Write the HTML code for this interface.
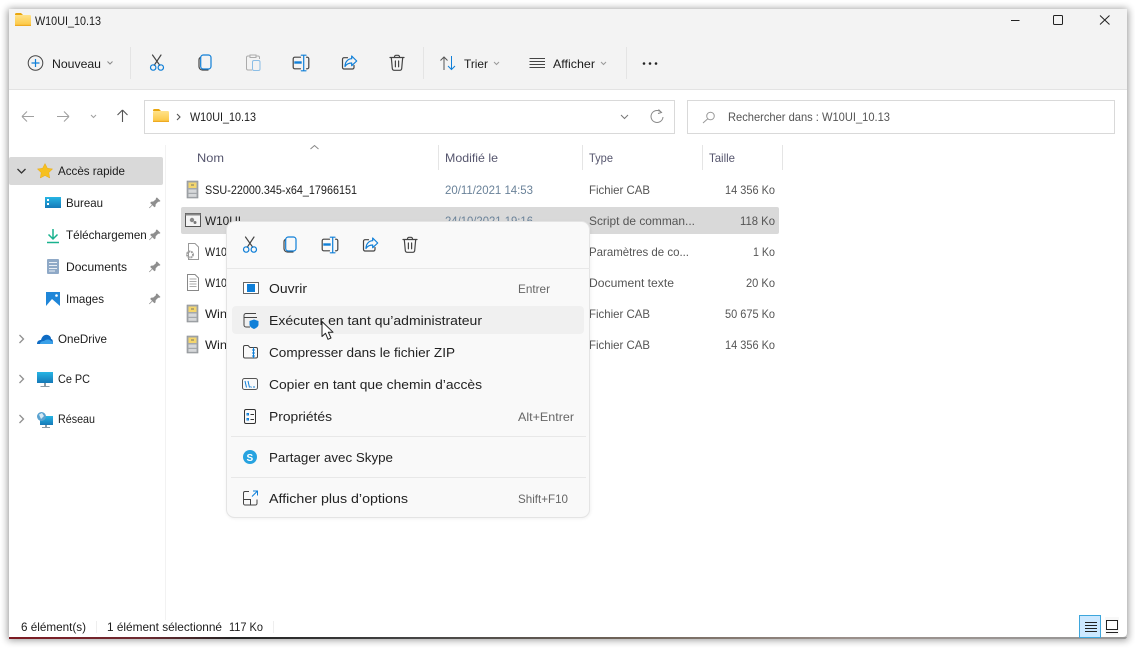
<!DOCTYPE html>
<html lang="fr"><head><meta charset="utf-8"><title>W10UI_10.13</title>
<style>
html,body{margin:0;padding:0;background:#fff;width:1135px;height:648px;overflow:hidden}
svg{display:block}
text{font-family:"Liberation Sans",sans-serif;font-size:12px;fill:#1c1c1c}
.m{font-size:13px;fill:#222}
.s{fill:#666}
.g{fill:#555}
.d{fill:#6a8299}
.h{fill:#56566e}
.b{fill:none;stroke:#0f7fd8;stroke-width:1.2;stroke-linecap:round;stroke-linejoin:round}
.k{fill:none;stroke:#444;stroke-width:1.2;stroke-linecap:round;stroke-linejoin:round}
</style></head><body>
<svg width="1135" height="648" viewBox="0 0 1135 648" xmlns="http://www.w3.org/2000/svg">
<defs>
<filter id="sh" x="-5%" y="-5%" width="110%" height="110%"><feGaussianBlur stdDeviation="4"/></filter>
<filter id="ms" x="-5%" y="-5%" width="110%" height="110%"><feGaussianBlur stdDeviation="1.5"/></filter>
<linearGradient id="edge" x1="0" x2="1" y1="0" y2="0">
<stop offset="0" stop-color="#7d1a22"/><stop offset=".12" stop-color="#6e2a30"/><stop offset=".2" stop-color="#222"/><stop offset=".36" stop-color="#444"/><stop offset=".55" stop-color="#6f6358"/><stop offset=".75" stop-color="#9a8f8a"/><stop offset="1" stop-color="#999"/>
</linearGradient>
<linearGradient id="fold" x1="0" x2="0" y1="0" y2="1"><stop offset="0" stop-color="#ffe28a"/><stop offset="1" stop-color="#fcc63f"/></linearGradient>
<linearGradient id="sky" x1="0" x2="0" y1="0" y2="1"><stop offset="0" stop-color="#27b5e4"/><stop offset="1" stop-color="#1579b8"/></linearGradient>
<clipPath id="tc"><rect x="60" y="225" width="87" height="20"/></clipPath>

<g id="cut"><path class="k" d="M-4.500-7.500 2.800 2.800M4-7.500-2.800 2.800"/><circle class="b" cx="-3.800" cy="5" r="2.700"/><circle class="b" cx="3.800" cy="5" r="2.700"/></g>
<g id="copy"><path class="k" d="M-4.700-5.500C-5.700-5-6-4-6-3V3.500C-6 5.500-4.500 7-2.500 7H3"/><rect class="b" x="-4.300" y="-8" width="10.300" height="14" rx="2.600"/></g>
<g id="ren"><path class="k" d="M-.5-5.800H-6.200A1.600 1.600 0 0 0-7.800-4.200V4.200A1.600 1.600 0 0 0-6.200 5.800H-.5M5.500-5.800H6.200A1.600 1.600 0 0 1 7.800-4.200V4.200A1.600 1.600 0 0 1 6.200 5.800H5.500"/><path d="M-6.700-1.700H.7V.7H-6.700z" fill="#0f7fd8"/><path class="b" d="M2.700-7.800V7.800M.3-7.800H5M.3 7.800H5"/></g>
<g id="sha"><path class="k" d="M-1.500-5.300H-5A1.500 1.500 0 0 0-6.500-3.800V4.500A1.500 1.500 0 0 0-5 6H3.500A1.500 1.500 0 0 0 5 4.500V2.500"/><path class="b" d="M2.700-7 7.700-2 2.700 2.700V0C0 0-2.500 1-4 3.500-4-1-1-4.300 2.700-4.300Z"/></g>
<g id="del"><path class="k" d="M-7-5.500H7M-2.500-5.500V-6.200A1.500 1.500 0 0 1-1-7.700H1A1.500 1.500 0 0 1 2.500-6.200V-5.500M-5.700-5.500-4.700 5.500A2 2 0 0 0-2.700 7.300H2.700A2 2 0 0 0 4.700 5.500L5.700-5.500M-1.600-2V3.800M1.600-2V3.800"/></g>
<g id="folder"><path d="M0 1.500A1.500 1.500 0 0 1 1.500 0H6L8 2H0Z" fill="#e9a60f"/><rect x="0" y="2" width="16" height="11" rx="1.200" fill="url(#fold)"/><rect x="0" y="11.800" width="16" height="1.200" fill="#eeaa22"/></g>
<g id="cab"><rect x="0" y="0" width="11" height="17" fill="#a4a8ac" stroke="#8a8e92" stroke-width=".6"/><rect x="1.500" y="1.500" width="8" height="5.500" fill="#f4d66e"/><rect x="1.500" y="8.500" width="8" height="3.300" fill="#d6d8da"/><rect x="1.500" y="13" width="8" height="2.800" fill="#d6d8da"/><rect x="4" y="3.500" width="3" height="1" fill="#776"/></g>
<g id="pin"><path d="M2.500-5.500 6-2 4.800-1.200 3.700-1.300 1.200 1.200 1 3.500-.2 4.200-2 2.300-5 5.300-5.500 4.800-2.500 1.800-4.300 0-3.500-1.200-1.200-1.500 1.400-3.800 1.400-5Z" fill="#8e8e8e"/></g>
</defs>

<rect width="1135" height="648" fill="#fff"/>
<rect x="8" y="9" width="1120" height="631" fill="#000" opacity=".42" filter="url(#sh)"/>
<path d="M9 637H1127V636C1127 638 1126 639 1124 639H9Z" fill="url(#edge)"/>
<path d="M9 9H1127V633A4 4 0 0 1 1123 637H9Z" fill="#fff"/>
<rect x="9" y="9" width="1118" height="80" fill="#f3f3f3"/>
<rect x="9" y="89" width="1118" height="1" fill="#e3e3e3"/>

<!-- title -->
<use href="#folder" x="15" y="13"/>
<text x="35" y="25" textLength="66" lengthAdjust="spacingAndGlyphs">W10UI_10.13</text>
<path d="M1011 20.500H1019.500" stroke="#222" stroke-width="1"/>
<rect x="1053.500" y="15.500" width="9" height="9" rx="1" fill="none" stroke="#222"/>
<path d="M1100 15.500 1109.500 24.500M1109.500 15.500 1100 24.500" stroke="#222" stroke-width="1"/>

<!-- toolbar -->
<circle cx="35.500" cy="63" r="7.300" fill="none" stroke="#444" stroke-width="1"/>
<path d="M35.500 59V67M31.500 63H39.500" stroke="#0f7fd8" stroke-width="1.200"/>
<text x="52" y="68" textLength="49" lengthAdjust="spacingAndGlyphs">Nouveau</text>
<path d="M107.500 61.500 110 64 112.500 61.500" fill="none" stroke="#888"/>
<rect x="130" y="47" width="1" height="32" fill="#e4e4e4"/>
<use href="#cut" x="157" y="62.500"/>
<use href="#copy" x="205" y="63"/>
<g opacity=".45"><path d="M250 56H248A1.500 1.500 0 0 0 246.500 57.500V68.500A1.500 1.500 0 0 0 248 70H252M256 56H258A1.500 1.500 0 0 1 259.500 57.500V59M250 55H256V57.500H250Z" fill="none" stroke="#555"/><rect x="252.500" y="60.500" width="7.500" height="10" rx="1.500" fill="none" stroke="#0f7fd8"/></g>
<use href="#ren" x="301" y="63"/>
<use href="#sha" x="349" y="63"/>
<use href="#del" x="397" y="63"/>
<rect x="423" y="47" width="1" height="32" fill="#e4e4e4"/>
<path d="M444 70V57M440.500 60.500 444 57 447.500 60.500" fill="none" stroke="#555" stroke-width="1"/>
<path d="M451.500 56V69.500M448 66 451.500 69.500 455 66" fill="none" stroke="#0f7fd8" stroke-width="1"/>
<text x="464" y="68" textLength="24" lengthAdjust="spacingAndGlyphs">Trier</text>
<path d="M494 62 496.500 64.500 499 62" fill="none" stroke="#999"/>
<path d="M529.500 58.500H545M529.500 61.500H545M529.500 64.500H545M529.500 67.500H545" stroke="#444"/>
<text x="553" y="68" textLength="42" lengthAdjust="spacingAndGlyphs">Afficher</text>
<path d="M601 62 603.500 64.500 606 62" fill="none" stroke="#999"/>
<rect x="626" y="47" width="1" height="32" fill="#e4e4e4"/>
<circle cx="644" cy="63.500" r="1.300" fill="#222"/><circle cx="650" cy="63.500" r="1.300" fill="#222"/><circle cx="656" cy="63.500" r="1.300" fill="#222"/>

<!-- nav -->
<path d="M22 116.500H34M22 116.500 27 111.500M22 116.500 27 121.500" fill="none" stroke="#a0a0a0" stroke-width="1.100"/>
<path d="M69 116.500H57M69 116.500 64 111.500M69 116.500 64 121.500" fill="none" stroke="#a0a0a0" stroke-width="1.100"/>
<path d="M91 115 93.500 117.500 96 115" fill="none" stroke="#a0a0a0"/>
<path d="M122.500 122V110M122.500 110 117.500 115M122.500 110 127.500 115" fill="none" stroke="#555" stroke-width="1.100"/>
<rect x="144.500" y="100.500" width="530" height="33" fill="#fff" stroke="#d9d9d9"/>
<use href="#folder" x="153" y="109"/>
<path d="M177 114 180 117 177 120" fill="none" stroke="#555" stroke-width="1.100"/>
<text x="190" y="121" textLength="66" lengthAdjust="spacingAndGlyphs">W10UI_10.13</text>
<path d="M621 115 624.500 118.500 628 115" fill="none" stroke="#777"/>
<path d="M661.500 112.500A6 6 0 1 0 663 117" fill="none" stroke="#888"/><path d="M658.500 109.500 661.500 112.500 658 113.500" fill="none" stroke="#888"/>
<rect x="687.500" y="100.500" width="427" height="33" fill="#fff" stroke="#d9d9d9"/>
<circle cx="710.500" cy="116" r="3.800" fill="none" stroke="#999"/><path d="M707.800 118.800 703 123" stroke="#999"/>
<text x="728" y="121" textLength="162" lengthAdjust="spacingAndGlyphs" class="g">Rechercher dans : W10UI_10.13</text>

<!-- sidebar -->
<rect x="165" y="145" width="1" height="475" fill="#f2f2f2"/>
<rect x="9" y="157" width="154" height="28" rx="2" fill="#d9d9d9"/>
<path d="M17.500 169 21.500 173 25.500 169" fill="none" stroke="#333" stroke-width="1.300"/>
<path d="M45 163.500 47.400 168.300 52.600 169 48.800 172.700 49.700 178 45 175.500 40.300 178 41.200 172.700 37.400 169 42.600 168.300Z" fill="#f6c01f" stroke="#e9a916" stroke-width=".5"/>
<text x="58" y="175" textLength="67" lengthAdjust="spacingAndGlyphs">Accès rapide</text>

<rect x="45" y="197" width="16" height="11" fill="url(#sky)"/><rect x="47" y="199" width="2" height="2" fill="#fff"/><rect x="47" y="203" width="2" height="2" fill="#fff"/>
<text x="66" y="207" textLength="37" lengthAdjust="spacingAndGlyphs">Bureau</text>
<use href="#pin" x="154.500" y="203"/>

<path d="M53 229V238.500M48.500 234.500 53 239 57.500 234.500" fill="none" stroke="#19b28e" stroke-width="1.500"/>
<path d="M47 242.500H59" stroke="#19b28e" stroke-width="1.500"/>
<g clip-path="url(#tc)"><text x="66" y="239" textLength="84" lengthAdjust="spacingAndGlyphs">Téléchargement</text></g>
<use href="#pin" x="154.500" y="235"/>

<rect x="47" y="259" width="12" height="15" rx="1" fill="#8fa9c7"/><path d="M49 262.500H57M49 265.500H57M49 268.500H57M49 271H55" stroke="#e8eef5"/>
<text x="66" y="271" textLength="61" lengthAdjust="spacingAndGlyphs">Documents</text>
<use href="#pin" x="154.500" y="267"/>

<rect x="46" y="292" width="14" height="14" fill="#1f86d8"/><path d="M46 306 52 299 60 306Z" fill="#fff"/><circle cx="56.500" cy="295.500" r="1.300" fill="#fff"/>
<text x="66" y="303" textLength="38" lengthAdjust="spacingAndGlyphs">Images</text>
<use href="#pin" x="154.500" y="299"/>

<path d="M19.500 335 23.500 339 19.500 343" fill="none" stroke="#909090" stroke-width="1.300"/>
<path d="M37 344C37 341 39 340 41 340 42 336 45 334 48 335 50 336 51 337 51 339 53 339 53 342 53 344Z" fill="#0f6cc4"/><path d="M40 344C40 342 42 341 44 341 46 339 50 339 51 341 53 341 53 343 53 344Z" fill="#3aa0e8"/>
<text x="58" y="343" textLength="49" lengthAdjust="spacingAndGlyphs">OneDrive</text>

<path d="M19.500 375 23.500 379 19.500 383" fill="none" stroke="#909090" stroke-width="1.300"/>
<rect x="37" y="372" width="16" height="11" fill="url(#sky)"/><rect x="44" y="383" width="2" height="3" fill="#8a9aa5"/><rect x="40.500" y="386" width="9" height="1" fill="#8a9aa5"/>
<text x="58" y="383" textLength="32" lengthAdjust="spacingAndGlyphs">Ce PC</text>

<path d="M19.500 415 23.500 419 19.500 423" fill="none" stroke="#909090" stroke-width="1.300"/>
<rect x="40" y="416" width="13" height="9" fill="url(#sky)"/><rect x="45" y="425" width="2" height="2" fill="#8a9aa5"/><rect x="42" y="427" width="8" height="1" fill="#8a9aa5"/>
<circle cx="41.500" cy="416.500" r="4.500" fill="#5aa2d0"/><path d="M39 414.500 42 413 44 416 41 419Z" fill="#d6eaf5"/>
<text x="58" y="423" textLength="37" lengthAdjust="spacingAndGlyphs">Réseau</text>

<!-- header -->
<path d="M310.500 149 314.500 145.500 318.500 149" fill="none" stroke="#888"/>
<text class="h" x="197" y="162" textLength="27" lengthAdjust="spacingAndGlyphs">Nom</text>
<text class="h" x="445" y="162" textLength="53" lengthAdjust="spacingAndGlyphs">Modifié le</text>
<text class="h" x="589" y="162" textLength="24" lengthAdjust="spacingAndGlyphs">Type</text>
<text class="h" x="709" y="162" textLength="26" lengthAdjust="spacingAndGlyphs">Taille</text>
<rect x="438" y="145" width="1" height="25" fill="#e5e5e5"/><rect x="582" y="145" width="1" height="25" fill="#e5e5e5"/><rect x="702" y="145" width="1" height="25" fill="#e5e5e5"/><rect x="782" y="145" width="1" height="25" fill="#e5e5e5"/>

<!-- rows -->
<rect x="181" y="207" width="598" height="27" rx="2" fill="#d9d9d9"/>
<use href="#cab" x="187" y="181"/>
<text x="205" y="194" textLength="152" lengthAdjust="spacingAndGlyphs">SSU-22000.345-x64_17966151</text>
<text class="d" x="445" y="194" textLength="88" lengthAdjust="spacingAndGlyphs">20/11/2021 14:53</text>
<text class="g" x="589" y="194" textLength="61" lengthAdjust="spacingAndGlyphs">Fichier CAB</text>
<text class="g" x="725" y="194" textLength="50" lengthAdjust="spacingAndGlyphs">14 356 Ko</text>

<rect x="185.500" y="213.500" width="15" height="13" fill="#f4f4f4" stroke="#555"/><rect x="185.500" y="213.500" width="15" height="2" fill="#888"/><circle cx="192" cy="220" r="2.200" fill="#888"/><circle cx="195" cy="222.500" r="1.500" fill="#777"/>
<text x="205" y="225" textLength="36" lengthAdjust="spacingAndGlyphs">W10UI</text>
<text class="d" x="445" y="225" textLength="88" lengthAdjust="spacingAndGlyphs">24/10/2021 19:16</text>
<text class="g" x="589" y="225" textLength="106" lengthAdjust="spacingAndGlyphs">Script de comman...</text>
<text class="g" x="740" y="225" textLength="35" lengthAdjust="spacingAndGlyphs">118 Ko</text>

<path d="M188.500 243.500H195L198.500 247V259.500H188.500Z" fill="#fff" stroke="#999"/><circle cx="190" cy="254.500" r="3" fill="none" stroke="#999" stroke-width="2" stroke-dasharray="1.500 1"/><circle cx="190" cy="254.500" r="3.500" fill="none" stroke="#aaa" stroke-width=".6"/>
<text x="205" y="256" textLength="22" lengthAdjust="spacingAndGlyphs">W10</text>
<text class="g" x="589" y="256" textLength="100" lengthAdjust="spacingAndGlyphs">Paramètres de co...</text>
<text class="g" x="753" y="256" textLength="22" lengthAdjust="spacingAndGlyphs">1 Ko</text>

<path d="M187.500 274.500H195L198.500 278V290.500H187.500Z" fill="#fff" stroke="#888"/><path d="M189.500 279H196.500M189.500 281.500H196.500M189.500 284H196.500M189.500 286.500H196.500" stroke="#aaa"/>
<text x="205" y="287" textLength="22" lengthAdjust="spacingAndGlyphs">W10</text>
<text class="g" x="589" y="287" textLength="85" lengthAdjust="spacingAndGlyphs">Document texte</text>
<text class="g" x="746" y="287" textLength="29" lengthAdjust="spacingAndGlyphs">20 Ko</text>

<use href="#cab" x="187" y="305"/>
<text x="205" y="318" textLength="22" lengthAdjust="spacingAndGlyphs">Win</text>
<text class="g" x="589" y="318" textLength="61" lengthAdjust="spacingAndGlyphs">Fichier CAB</text>
<text class="g" x="725" y="318" textLength="50" lengthAdjust="spacingAndGlyphs">50 675 Ko</text>

<use href="#cab" x="187" y="336"/>
<text x="205" y="349" textLength="22" lengthAdjust="spacingAndGlyphs">Win</text>
<text class="g" x="589" y="349" textLength="61" lengthAdjust="spacingAndGlyphs">Fichier CAB</text>
<text class="g" x="725" y="349" textLength="50" lengthAdjust="spacingAndGlyphs">14 356 Ko</text>

<!-- context menu -->
<rect x="226" y="222" width="365" height="297" rx="9" fill="#000" opacity=".05" filter="url(#ms)"/>
<rect x="226.500" y="221.500" width="363" height="296" rx="8" fill="#f9f9f9" stroke="#e4e4e4"/>
<use href="#cut" x="250" y="244.500"/>
<use href="#copy" x="290" y="245"/>
<use href="#ren" x="330" y="245"/>
<use href="#sha" x="370" y="245"/>
<use href="#del" x="410" y="245"/>
<rect x="227" y="268" width="363" height="1" fill="#e8e8e8"/>

<rect x="243.500" y="282.500" width="15" height="11" fill="#fff" stroke="#666"/><rect x="247" y="284" width="8" height="8" fill="#0f7fd8"/>
<text class="m" x="269" y="293" textLength="38" lengthAdjust="spacingAndGlyphs">Ouvrir</text>
<text class="s" x="518" y="293" textLength="32" lengthAdjust="spacingAndGlyphs">Entrer</text>

<rect x="232" y="306" width="352" height="28" rx="4" fill="#f0f0f0"/>
<path d="M256 313.500H246A2 2 0 0 0 244 315.500V325A2 2 0 0 0 246 327H250M244 317.500H257" fill="none" stroke="#444"/>
<path d="M254 319.500 258.500 321V324.500C258.500 326.500 256.500 328 254 329 251.500 328 249.500 326.500 249.500 324.500V321Z" fill="#0f7fd8"/>
<text class="m" x="269" y="325" textLength="213" lengthAdjust="spacingAndGlyphs">Exécuter en tant qu’administrateur</text>

<path d="M248 345.500H245A1.500 1.500 0 0 0 243.500 347V356.500A1.500 1.500 0 0 0 245 358H256A1.500 1.500 0 0 0 257.500 356.500V349A1.500 1.500 0 0 0 256 347.500H250Z" fill="none" stroke="#444"/>
<path d="M253.500 347.500V358M252 350H255M252 353H255M252 356H255" stroke="#0f7fd8" fill="none"/>
<text class="m" x="269" y="357" textLength="186" lengthAdjust="spacingAndGlyphs">Compresser dans le fichier ZIP</text>

<rect x="242.500" y="378.500" width="15" height="11" rx="2" fill="none" stroke="#555"/><path d="M245 381 246.500 387.500M248 381 249.500 387.500M250.500 386.500 251.500 387.500M253 387H255" stroke="#0f7fd8" fill="none"/>
<text class="m" x="269" y="389" textLength="213" lengthAdjust="spacingAndGlyphs">Copier en tant que chemin d’accès</text>

<rect x="244.500" y="409.500" width="11" height="14" rx="1.500" fill="none" stroke="#333"/><path d="M247 413.500H248.500V415H247ZM247 418.500H248.500V420H247Z" fill="none" stroke="#0f7fd8"/><path d="M250.500 414.500H254M250.500 419.500H254" stroke="#333"/>
<text class="m" x="269" y="421" textLength="63" lengthAdjust="spacingAndGlyphs">Propriétés</text>
<text class="s" x="518" y="421" textLength="56" lengthAdjust="spacingAndGlyphs">Alt+Entrer</text>

<rect x="231" y="436" width="355" height="1" fill="#e8e8e8"/>
<circle cx="250" cy="457" r="7" fill="#27a3e0"/>
<text x="246.500" y="461" style="font-size:10px;font-weight:bold;fill:#fff">S</text>
<text class="m" x="269" y="462" textLength="124" lengthAdjust="spacingAndGlyphs">Partager avec Skype</text>
<rect x="231" y="477" width="355" height="1" fill="#e8e8e8"/>

<path d="M249 491.500H245A1.500 1.500 0 0 0 243.500 493V503.500A1.500 1.500 0 0 0 245 505H255.500A1.500 1.500 0 0 0 257 503.500V499.500M243.500 499.500H250.500V505" fill="none" stroke="#444"/>
<path d="M252 496.500 257 491.500M253 491H257.500V495.500" fill="none" stroke="#0f7fd8"/>
<text class="m" x="269" y="503" textLength="139" lengthAdjust="spacingAndGlyphs">Afficher plus d’options</text>
<text class="s" x="518" y="503" textLength="50" lengthAdjust="spacingAndGlyphs">Shift+F10</text>

<!-- cursor -->
<path d="M322 321.500V336.500L325.500 333.300 328 339.300 331 338 328.300 332.200H333Z" fill="#fff" stroke="#222" stroke-width="1" stroke-linejoin="round"/>

<!-- status -->
<text x="21" y="631" textLength="65" lengthAdjust="spacingAndGlyphs">6 élément(s)</text>
<rect x="96" y="621" width="1" height="12" fill="#eee"/>
<text x="107" y="631" textLength="115" lengthAdjust="spacingAndGlyphs">1 élément sélectionné</text>
<text x="229" y="631" textLength="34" lengthAdjust="spacingAndGlyphs">117 Ko</text>
<rect x="273" y="621" width="1" height="12" fill="#eee"/>
<rect x="1079.500" y="615.500" width="21" height="22" fill="#cce8ff" stroke="#3ea6dc"/>
<path d="M1085 622.500H1097M1085 625.500H1097M1085 628.500H1097M1085 631.500H1097" stroke="#222"/>
<rect x="1105" y="617" width="14" height="18" fill="#f8f8f8"/>
<rect x="1106.500" y="620.500" width="11" height="9" fill="#fff" stroke="#222"/>
<path d="M1106 632.500H1118" stroke="#222"/>
</svg>
</body></html>
